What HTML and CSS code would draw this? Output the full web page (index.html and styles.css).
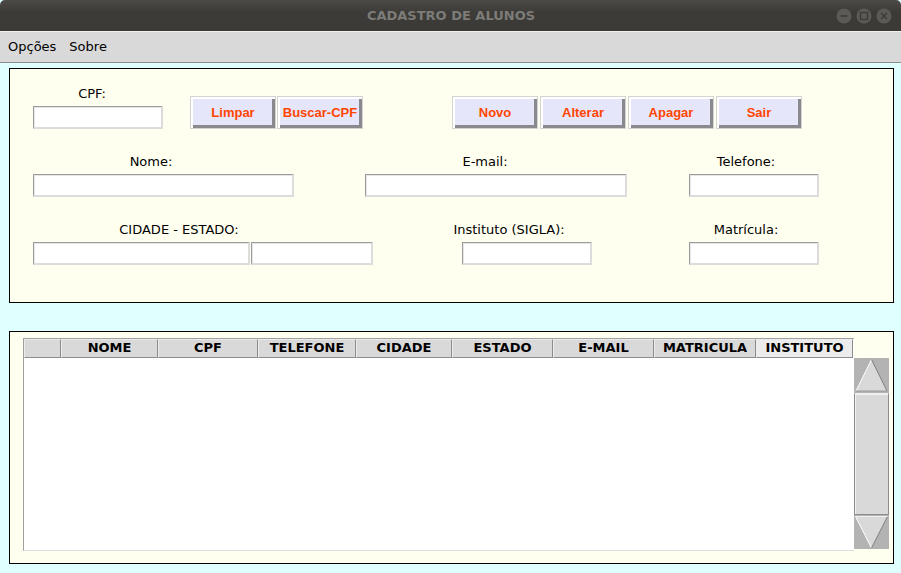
FILE: index.html
```html
<!DOCTYPE html>
<html lang="pt">
<head>
<meta charset="utf-8">
<title>CADASTRO DE ALUNOS</title>
<link rel="stylesheet" href="styles.css">
</head>
<body>
<div class="window">
  <header class="titlebar">
    <span></span>
    <span class="title">CADASTRO DE ALUNOS</span>
    <span class="controls">
      <svg width="60" height="16" viewBox="0 0 60 16">
        <circle cx="8" cy="8" r="7.5" fill="#5b5a56"/>
        <line x1="4.5" y1="8" x2="11.5" y2="8" stroke="#3b3a36" stroke-width="1.5"/>
        <circle cx="28" cy="8" r="7.5" fill="#5b5a56"/>
        <rect x="24.5" y="4.5" width="7" height="7" fill="none" stroke="#3b3a36" stroke-width="1.3"/>
        <circle cx="48" cy="8" r="7.5" fill="#5b5a56"/>
        <path d="M45 5 L51 11 M51 5 L45 11" stroke="#3b3a36" stroke-width="1.3"/>
      </svg>
    </span>
  </header>
  <nav class="menubar">
    <span class="menu-item">Opções</span>
    <span class="menu-item">Sobre</span>
  </nav>
  <main class="content">
    <section class="frame form">
      <div class="row">
        <div class="field">
          <div class="lbl lc59">CPF:</div>
          <input class="entry w130" type="text">
        </div>
        <div class="btns g1">
          <button class="btn">Limpar</button>
          <button class="btn">Buscar-CPF</button>
        </div>
        <div class="btns g2">
          <button class="btn">Novo</button>
          <button class="btn">Alterar</button>
          <button class="btn">Apagar</button>
          <button class="btn">Sair</button>
        </div>
      </div>
      <div class="row">
        <div class="field">
          <div class="lbl lc118">Nome:</div>
          <input class="entry w261" type="text">
        </div>
        <div class="field m71">
          <div class="lbl lc120">E-mail:</div>
          <input class="entry w262" type="text">
        </div>
        <div class="field m62">
          <div class="lbl lc57">Telefone:</div>
          <input class="entry w130" type="text">
        </div>
      </div>
      <div class="row">
        <div class="field">
          <div class="lbl lc146">CIDADE - ESTADO:</div>
          <div class="pair">
            <input class="entry w217" type="text">
            <input class="entry w122" type="text">
          </div>
        </div>
        <div class="field m89">
          <div class="lbl lc47">Instituto (SIGLA):</div>
          <input class="entry w130" type="text">
        </div>
        <div class="field m97">
          <div class="lbl lc57">Matrícula:</div>
          <input class="entry w130" type="text">
        </div>
      </div>
    </section>
    <section class="frame list">
      <div class="tree">
        <div class="thead">
          <div class="th c37"></div>
          <div class="th c97">NOME</div>
          <div class="th c100">CPF</div>
          <div class="th c98">TELEFONE</div>
          <div class="th c96">CIDADE</div>
          <div class="th c101">ESTADO</div>
          <div class="th c101">E-MAIL</div>
          <div class="th c102">MATRICULA</div>
          <div class="th c97 active">INSTITUTO</div>
        </div>
      </div>
      <div class="scrollbar">
        <svg class="arrow" width="35" height="35" viewBox="0 0 35 35">
          <rect width="35" height="35" fill="#b3b3b3"/>
          <polygon points="17.5,1.5 2,33 33,33" fill="#d9d9d9"/>
          <line x1="17.5" y1="1.5" x2="2" y2="33" stroke="#ffffff" stroke-width="1"/>
          <line x1="17.5" y1="1.5" x2="33" y2="33" stroke="#808080" stroke-width="1"/>
          <line x1="2" y1="33" x2="33" y2="33" stroke="#9a9a9a" stroke-width="1"/>
        </svg>
        <div class="thumb"></div>
        <svg class="arrow" width="35" height="34" viewBox="0 0 35 34">
          <rect width="35" height="34" fill="#b3b3b3"/>
          <polygon points="1.5,1.5 33.5,1.5 17.5,33" fill="#d9d9d9"/>
          <line x1="1.5" y1="1.5" x2="17.5" y2="33" stroke="#ffffff" stroke-width="1"/>
          <line x1="33.5" y1="1.5" x2="17.5" y2="33" stroke="#808080" stroke-width="1"/>
          <line x1="1.5" y1="1.5" x2="33.5" y2="1.5" stroke="#f0f0f0" stroke-width="1"/>
        </svg>
      </div>
    </section>
  </main>
</div>
</body>
</html>
```
FILE: styles.css
```css
* { box-sizing: border-box; }
html, body {
  margin: 0;
  padding: 0;
  width: 901px;
  height: 573px;
  overflow: hidden;
  background: #e0ffff;
}
.window {
  width: 901px;
  height: 573px;
  font-family: "DejaVu Sans", sans-serif;
  font-size: 13px;
  color: #000;
}
.titlebar {
  height: 31px;
  background: linear-gradient(#4b4a46, #3c3b37 40%, #3b3a36);
  border-radius: 5px 5px 0 0;
  display: grid;
  grid-template-columns: 1fr auto 1fr;
  align-items: center;
}
.title {
  font-family: "DejaVu Sans", sans-serif;
  font-weight: bold;
  font-size: 13px;
  color: #7d7c78;
  padding-left: 1px;
}
.controls {
  justify-self: end;
  display: flex;
  padding-right: 5px;
  padding-top: 1px;
}
.controls svg { display: block; }
.menubar {
  height: 32px;
  background: #d9d9d9;
  border-top: 1px solid #f2f2f2;
  border-bottom: 1px solid #8c8c8c;
  display: flex;
  align-items: center;
  padding-left: 8px;
  padding-bottom: 1px;
  gap: 13px;
  line-height: 17px;
}
.content {
  padding: 5px 0 0 9px;
}
.frame {
  width: 885px;
  border: 1px solid #000;
  background: #fffff0;
}
.form {
  height: 235px;
  margin-bottom: 28px;
  padding: 16px 0 0 23px;
  display: flex;
  flex-direction: column;
  gap: 24px;
}
.row {
  display: flex;
  align-items: flex-start;
}
.field {
  display: flex;
  flex-direction: column;
  gap: 4px;
}
.lbl {
  width: 0;
  height: 17px;
  line-height: 17px;
  display: flex;
  justify-content: center;
  white-space: nowrap;
}
.lc59 { margin-left: 59px; }
.lc118 { margin-left: 118px; }
.lc120 { margin-left: 120px; }
.lc57 { margin-left: 57px; }
.lc146 { margin-left: 146px; }
.lc47 { margin-left: 47px; }
.m71 { margin-left: 71px; }
.m62 { margin-left: 62px; }
.m89 { margin-left: 89px; }
.m97 { margin-left: 97px; }
.entry {
  display: block;
  margin: 0;
  padding: 0;
  height: 23px;
  background: #fff;
  border-style: solid;
  border-width: 1px 2px 2px 1px;
  border-color: #9c9c9c #dcdcdc #dcdcdc #9c9c9c;
  box-shadow: inset 1px 1px 0 #e6e6e6;
  outline: none;
  font: 13px "DejaVu Sans", sans-serif;
}
.w130 { width: 130px; }
.w261 { width: 261px; }
.w262 { width: 262px; }
.w217 { width: 217px; }
.w122 { width: 122px; }
.pair {
  display: flex;
  gap: 1px;
}
.btns {
  display: flex;
  margin-top: 11px;
}
.g1 { margin-left: 27px; gap: 1px; }
.g2 { margin-left: 89px; gap: 2px; }
.btn {
  width: 86px;
  height: 33px;
  margin: 0;
  padding: 0;
  background: #e6e6fa;
  border: 1px solid #d4d4d4;
  box-shadow: inset 2px 2px 0 #ffffff, inset -3px -3px 0 #8a8a8e;
  font-family: "Liberation Sans", Arial, sans-serif;
  font-weight: bold;
  font-size: 13px;
  color: #ff4500;
  padding-bottom: 1px;
}
.list {
  height: 233px;
  padding: 6px 0 0 13px;
  display: flex;
  align-items: flex-start;
}
.tree {
  width: 831px;
  height: 213px;
  background: #fff;
  border-left: 1px solid #a0a0a0;
  border-top: 1px solid #a0a0a0;
  border-bottom: 1px solid #dedede;
}
.thead {
  display: flex;
  height: 19px;
}
.th {
  height: 19px;
  background: #d9d9d9;
  border-left: 1px solid #ececec;
  border-top: 1px solid #ececec;
  border-right: 1px solid #8c8c8c;
  border-bottom: 1px solid #8c8c8c;
  font-weight: bold;
  font-size: 13px;
  line-height: 16px;
  text-align: center;
  white-space: nowrap;
}
.th.active { background: #ececec; }
.c37 { width: 37px; }
.c96 { width: 96px; }
.c97 { width: 97px; }
.c98 { width: 98px; }
.c100 { width: 100px; }
.c101 { width: 101px; }
.c102 { width: 102px; }
.scrollbar {
  width: 35px;
  height: 191px;
  margin-top: 20px;
  display: flex;
  flex-direction: column;
  gap: 0;
}
.arrow { display: block; flex: none; }
.thumb {
  height: 122px;
  background: #d9d9d9;
  border: 1px solid #8c8c8c;
  border-top-color: #eeeeee;
  box-shadow: inset 1px 1px 0 #f2f2f2;
}
```
